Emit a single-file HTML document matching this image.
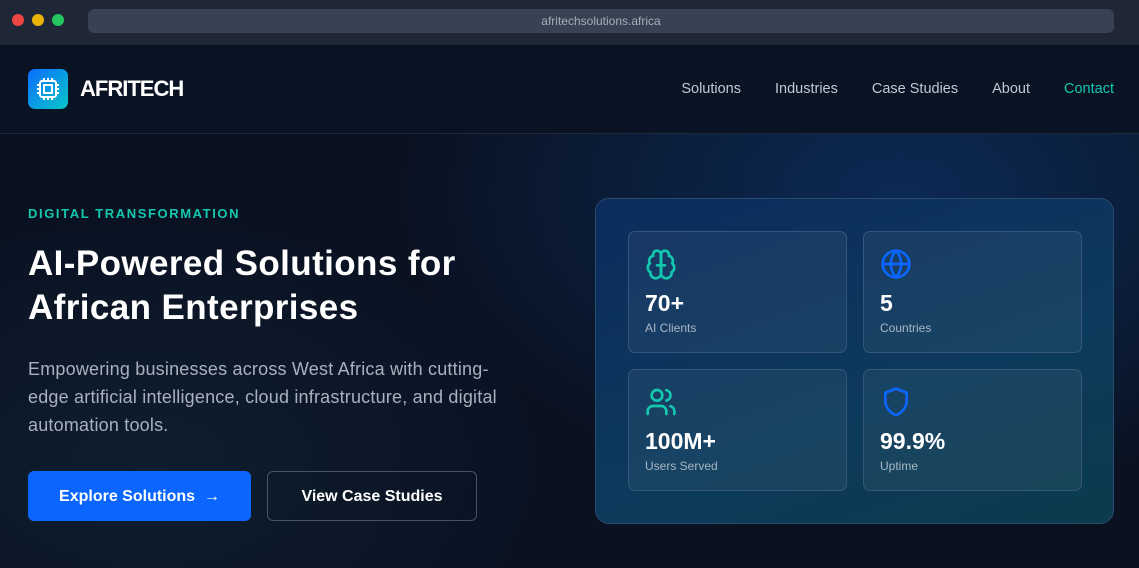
<!DOCTYPE html>
<html><head><style>
*{margin:0;padding:0;box-sizing:border-box}
body{width:1139px;height:568px;overflow:hidden;background:#0a1222;font-family:"Liberation Sans",sans-serif;position:relative}
.bar{position:absolute;top:0;left:0;width:1139px;height:45px;background:#1f2737}
.dot{position:absolute;top:14px;width:12px;height:12px;border-radius:50%}
.url{position:absolute;left:88px;top:9px;width:1026px;height:24px;background:#394252;border-radius:6px;color:#a5adb9;font-size:12px;text-align:center;line-height:24px}
.nav{position:absolute;top:45px;left:0;width:1139px;height:89px;background:#0a1324;border-bottom:1px solid #1e2a3c}
.logo{position:absolute;left:28px;top:24px;width:40px;height:40px;border-radius:7px;background:linear-gradient(135deg,#0b6cff,#07c8c8)}
.brand{position:absolute;left:80px;top:31px;color:#fff;font-weight:bold;font-size:22px;letter-spacing:-1px}
.links{position:absolute;top:36px;right:25px;font-size:14.5px;color:#c2c8d2}
.links span{margin-left:34px}
.hero{position:absolute;top:134px;left:0;width:1139px;height:434px;background:radial-gradient(ellipse 500px 300px at 900px 60px,#0c2a55 0%,rgba(10,20,40,0) 100%),radial-gradient(ellipse 400px 250px at 150px 330px,#0e1e2e 0%,rgba(0,0,0,0) 100%),#0a1222}
.tag{position:absolute;left:28px;top:72px;color:#14c8b0;font-size:13px;letter-spacing:1.6px;font-weight:bold}
h1{position:absolute;left:28px;top:108px;color:#fff;font-size:35px;line-height:44px;font-weight:bold;letter-spacing:.4px}
.p{position:absolute;left:28px;top:221px;color:#a8b1bf;font-size:18px;line-height:28px;width:500px;letter-spacing:.2px}
.b1{position:absolute;left:28px;top:337px;width:223px;height:50px;background:#0b66ff;border-radius:6px;color:#fff;font-weight:bold;font-size:16px;line-height:52px;text-align:center}
.b2{position:absolute;left:267px;top:337px;width:210px;height:50px;border:1px solid #4a5363;border-radius:6px;color:#fff;font-weight:bold;font-size:16px;line-height:50px;text-align:center}
.panel{position:absolute;left:595px;top:64px;width:519px;height:326px;border:1px solid #2a4a6e;border-radius:14px;background:linear-gradient(160deg,#0b2c5c,#0c3a5c 60%,#0b3b4c)}
.card{position:absolute;width:219px;height:122px;border:1px solid #35557a;border-radius:7px;background:rgba(255,255,255,.05)}
.card svg{position:absolute;left:16px;top:16px}
.num{position:absolute;left:16px;top:58px;color:#fff;font-weight:bold;font-size:23px}
.lab{position:absolute;left:16px;top:89px;color:#a9b6c6;font-size:12px}
</style></head><body>
<div class="bar"><div class="dot" style="left:12px;background:#ef4444"></div><div class="dot" style="left:32px;background:#eab308"></div><div class="dot" style="left:52px;background:#22c55e"></div><div class="url">afritechsolutions.africa</div></div>
<div class="nav"><div class="logo"><svg width="40" height="40" viewBox="0 0 40 40" fill="none" stroke="#fff" stroke-width="2"><rect x="12" y="12" width="16" height="16" rx="2"/><rect x="16" y="16" width="8" height="8"/><path d="M16 9v3M20 9v3M24 9v3M16 28v3M20 28v3M24 28v3M9 16h3M9 20h3M9 24h3M28 16h3M28 20h3M28 24h3"/></svg></div><div class="brand">AFRITECH</div>
<div class="links"><span>Solutions</span><span>Industries</span><span>Case Studies</span><span>About</span><span style="color:#14c8b0">Contact</span></div></div>
<div class="hero">
<div class="tag">DIGITAL TRANSFORMATION</div>
<h1>AI-Powered Solutions for<br>African Enterprises</h1>
<div class="p">Empowering businesses across West Africa with cutting-edge artificial intelligence, cloud infrastructure, and digital automation tools.</div>
<div class="b1">Explore Solutions &nbsp;→</div>
<div class="b2">View Case Studies</div>
<div class="panel">
<div class="card" style="left:32px;top:32px"><svg width="32" height="32" viewBox="0 0 24 24" fill="none" stroke="#14c8b0" stroke-width="2" stroke-linecap="round"><path d="M12 5a3 3 0 1 0-5.9.8 4 4 0 0 0-2.5 5.8 4 4 0 0 0 .5 6.6A4 4 0 1 0 12 18Z"/><path d="M12 5a3 3 0 1 1 5.9.8 4 4 0 0 1 2.5 5.8 4 4 0 0 1-.5 6.6A4 4 0 1 1 12 18Z"/><path d="M12 5v15M9 13h6"/></svg><div class="num">70+</div><div class="lab">AI Clients</div></div>
<div class="card" style="left:267px;top:32px"><svg width="32" height="32" viewBox="0 0 24 24" fill="none" stroke="#0b66ff" stroke-width="2"><circle cx="12" cy="12" r="10"/><path d="M2 12h20M12 2a15 15 0 0 1 0 20a15 15 0 0 1 0-20"/></svg><div class="num">5</div><div class="lab">Countries</div></div>
<div class="card" style="left:32px;top:170px"><svg width="32" height="32" viewBox="0 0 24 24" fill="none" stroke="#14c8b0" stroke-width="2" stroke-linecap="round"><circle cx="9" cy="7" r="4"/><path d="M2 21v-2a4 4 0 0 1 4-4h6a4 4 0 0 1 4 4v2M16 3.1a4 4 0 0 1 0 7.8M22 21v-2a4 4 0 0 0-3-3.9"/></svg><div class="num">100M+</div><div class="lab">Users Served</div></div>
<div class="card" style="left:267px;top:170px"><svg width="32" height="32" viewBox="0 0 24 24" fill="none" stroke="#0b66ff" stroke-width="2" stroke-linejoin="round"><path d="M12 2l8 3v6c0 5-3.5 9-8 11-4.5-2-8-6-8-11V5Z"/></svg><div class="num">99.9%</div><div class="lab">Uptime</div></div>
</div></div>
</body></html>
